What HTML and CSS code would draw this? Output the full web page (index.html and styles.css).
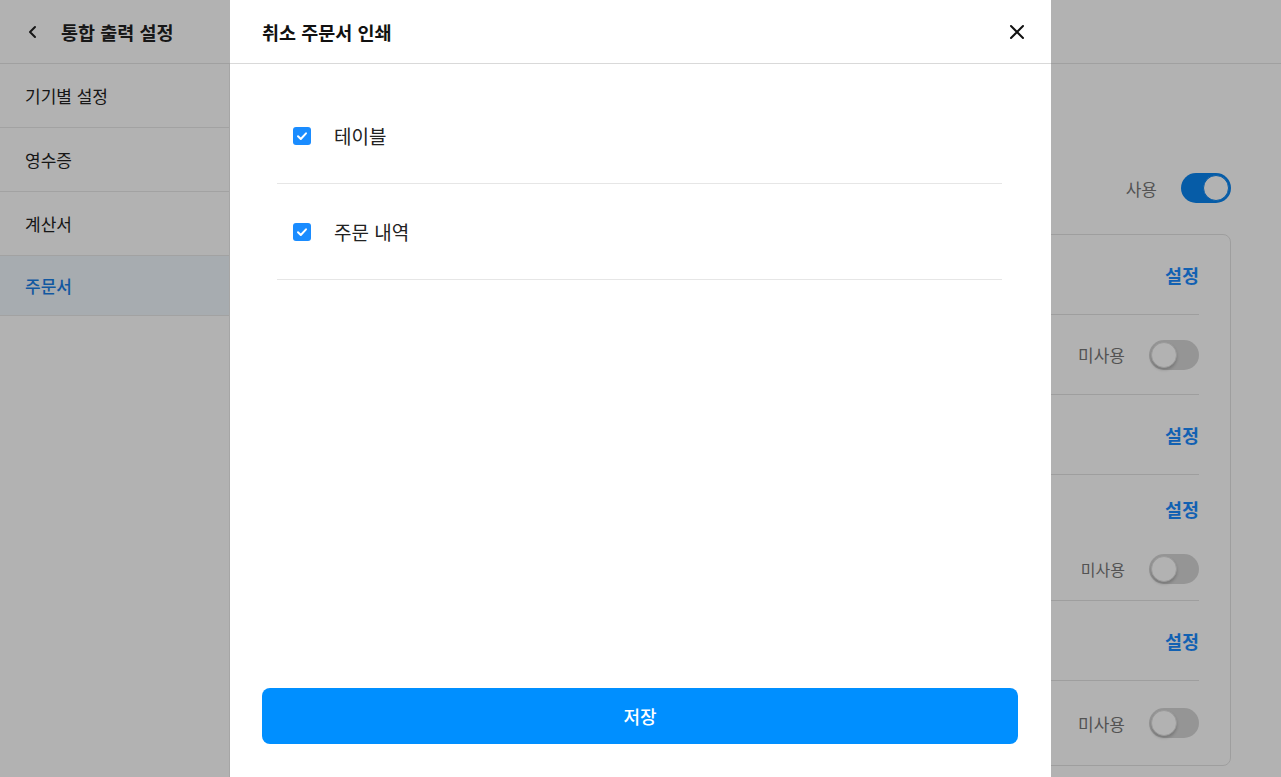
FILE: index.html
```html
<!DOCTYPE html>
<html lang="ko">
<head>
    <meta charset="utf-8">
    <link rel="stylesheet" href="styles.css">
</head>
<body>
    <div class="app">
        <div class="app-header">
            <span class="back">
                <svg width="16" height="16" viewBox="0 0 16 16"><path d="M10 3 L5 8 L10 13" fill="none" stroke="#222" stroke-width="2" stroke-linecap="round" stroke-linejoin="round"/></svg>
            </span>
            <span class="app-title">통합 출력 설정</span>
        </div>
        <div class="app-body">
            <div class="sidebar">
                <div class="side-item">기기별 설정</div>
                <div class="side-item">영수증</div>
                <div class="side-item">계산서</div>
                <div class="side-item active">주문서</div>
            </div>
            <div class="main">
                <div class="section-head">
                    <span class="state">사용</span>
                    <span class="toggle on"><span class="knob"></span></span>
                </div>
                <div class="card">
                    <div class="card-row"><span class="link">설정</span></div>
                    <div class="card-row"><span class="state">미사용</span><span class="toggle"><span class="knob"></span></span></div>
                    <div class="card-row"><span class="link">설정</span></div>
                    <div class="card-row tall">
                        <span class="link">설정</span>
                        <div class="sub"><span class="state small">미사용</span><span class="toggle"><span class="knob"></span></span></div>
                    </div>
                    <div class="card-row"><span class="link">설정</span></div>
                    <div class="card-row last"><span class="state">미사용</span><span class="toggle"><span class="knob"></span></span></div>
                </div>
            </div>
        </div>
    </div>

    <div class="dim"></div>

    <div class="modal">
        <div class="modal-header">
            <span class="modal-title">취소 주문서 인쇄</span>
            <span class="close">
                <svg width="16" height="16" viewBox="0 0 16 16"><path d="M2 2 L14 14 M14 2 L2 14" stroke="#111" stroke-width="2" stroke-linecap="round"/></svg>
            </span>
        </div>
        <div class="modal-body">
            <label class="check-row">
                <span class="checkbox"><svg width="12" height="12" viewBox="0 0 12 12"><path d="M2 6.2 L4.8 9 L10 3.3" fill="none" stroke="#fff" stroke-width="2" stroke-linecap="round" stroke-linejoin="round"/></svg></span>
                <span class="check-label">테이블</span>
            </label>
            <label class="check-row">
                <span class="checkbox"><svg width="12" height="12" viewBox="0 0 12 12"><path d="M2 6.2 L4.8 9 L10 3.3" fill="none" stroke="#fff" stroke-width="2" stroke-linecap="round" stroke-linejoin="round"/></svg></span>
                <span class="check-label">주문 내역</span>
            </label>
        </div>
        <div class="modal-footer">
            <button class="save-button">저장</button>
        </div>
    </div>
</body>
</html>
```

FILE: styles.css
```css
* {
    box-sizing: border-box;
}
body {
    margin: 0;
    font-family: "Noto Sans CJK KR", "Noto Sans", sans-serif;
    color: #222;
    background-color: #fff;
}
.app {
    height: 777px;
    display: flex;
    flex-direction: column;
}
.app-header {
    height: 64px;
    flex: none;
    display: flex;
    align-items: center;
    padding-left: 25px;
    border-bottom: 1px solid #e6e6e6;
}
.back {
    display: flex;
    width: 16px;
    margin-right: 20px;
}
.app-title {
    font-size: 18.5px;
    font-weight: 700;
}
.app-body {
    flex: 1;
    display: flex;
}
.sidebar {
    width: 230px;
    flex: none;
    border-right: 1px solid #eee;
}
.side-item {
    height: 64px;
    display: flex;
    align-items: center;
    padding-left: 25px;
    font-size: 17px;
    font-weight: 400;
    border-bottom: 1px solid #e8e8e8;
}
.side-item.active {
    height: 60px;
    color: #1a7fe6;
    font-weight: 500;
    background-color: #f0f6fd;
}
.main {
    flex: 1;
    padding: 100px 50px 0 40px;
}
.section-head {
    height: 48px;
    display: flex;
    justify-content: flex-end;
    align-items: center;
    gap: 24px;
}
.state {
    font-size: 17px;
    color: #777;
}
.state.small {
    font-size: 16px;
}
.toggle {
    width: 50px;
    height: 30px;
    border-radius: 15px;
    background-color: #d6d6d6;
    display: flex;
    align-items: center;
    padding: 2px;
}
.toggle .knob {
    width: 26px;
    height: 26px;
    border-radius: 50%;
    background-color: #fff;
    border: 1px solid #ddd;
    box-shadow: 0 2px 3px rgba(0, 0, 0, 0.2);
}
.toggle.on {
    background-color: #0a84f0;
    justify-content: flex-end;
}
.toggle.on .knob {
    border-color: #0a84f0;
    box-shadow: none;
}
.card {
    margin-top: 22px;
    border: 1px solid #e3e3e3;
    border-radius: 8px;
    padding: 0 31px 0 24px;
}
.card-row {
    height: 80px;
    display: flex;
    justify-content: flex-end;
    align-items: center;
    gap: 24px;
    border-bottom: 1px solid #e3e3e3;
}
.card-row.tall {
    height: 126px;
    flex-direction: column;
    align-items: flex-end;
    justify-content: flex-start;
    padding-top: 19px;
    gap: 30px;
}
.card-row.last {
    border-bottom: none;
    height: 84px;
}
.sub {
    display: flex;
    align-items: center;
    gap: 24px;
}
.link {
    font-size: 18.5px;
    font-weight: 700;
    color: #1a8cff;
    line-height: 30px;
}
.dim {
    position: fixed;
    inset: 0;
    background-color: rgba(0, 0, 0, 0.3);
}
.modal {
    position: fixed;
    top: 0;
    bottom: 0;
    left: 230px;
    width: 821px;
    background-color: #fff;
    display: flex;
    flex-direction: column;
}
.modal-header {
    height: 64px;
    flex: none;
    display: flex;
    align-items: center;
    justify-content: space-between;
    padding: 0 26px 0 32px;
    border-bottom: 1px solid #d9d9d9;
}
.modal-title {
    font-size: 18.5px;
    font-weight: 700;
    color: #111;
}
.close {
    display: flex;
}
.modal-body {
    flex: 1;
    padding: 24px 49px 0 47px;
}
.check-row {
    height: 96px;
    display: flex;
    align-items: center;
    padding-left: 16px;
    border-bottom: 1px solid #e6e6e6;
    gap: 23px;
}
.checkbox {
    width: 18px;
    height: 18px;
    border-radius: 3px;
    background-color: #1a8cff;
    display: flex;
    align-items: center;
    justify-content: center;
}
.check-label {
    font-size: 19px;
    color: #222;
}
.modal-footer {
    padding: 0 33px 33px 32px;
}
.save-button {
    width: 100%;
    height: 56px;
    border: none;
    border-radius: 8px;
    background-color: #008fff;
    color: #fff;
    font-family: inherit;
    font-size: 18px;
    font-weight: 500;
}
```
